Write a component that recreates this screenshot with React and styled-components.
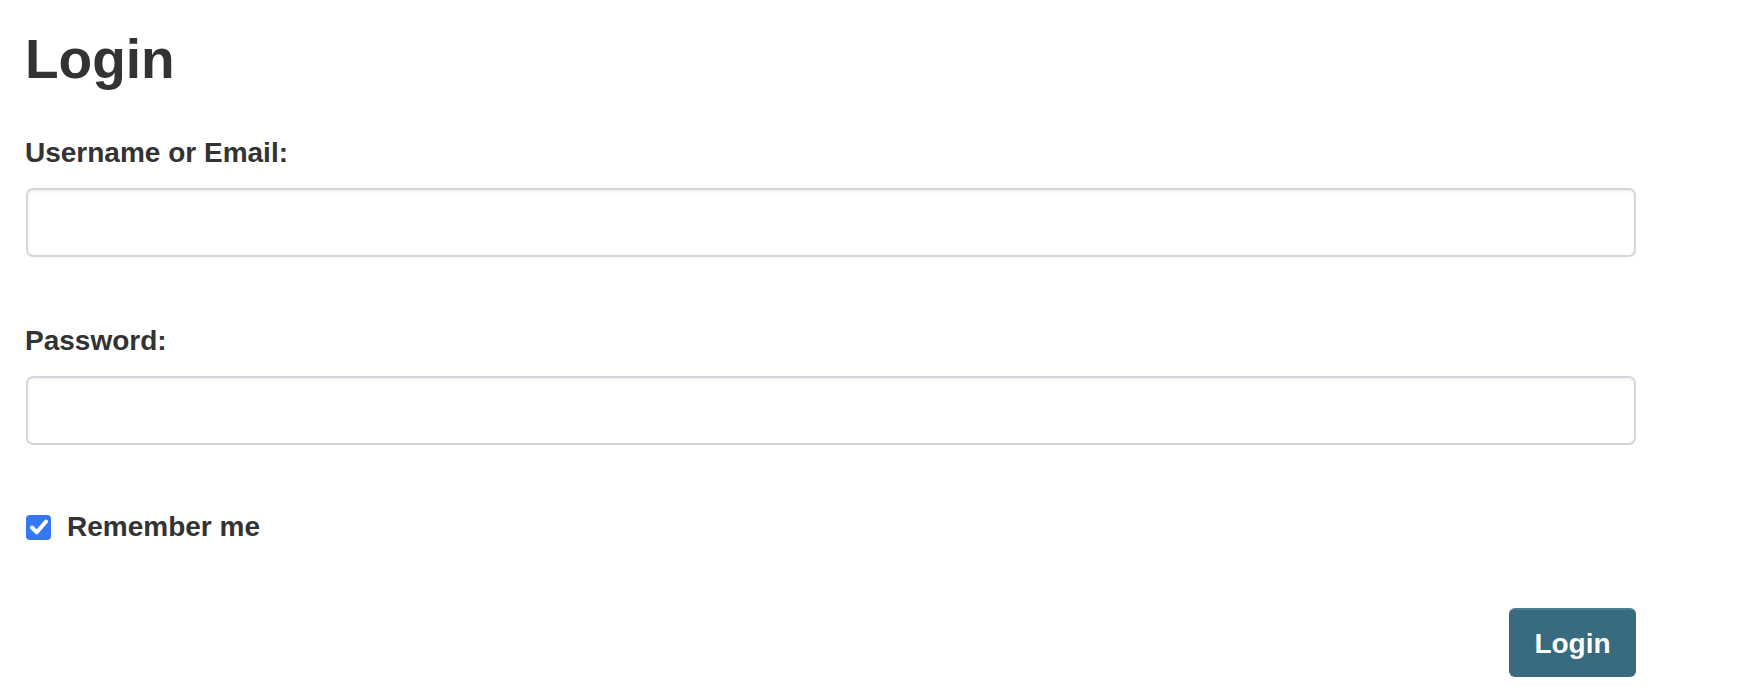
import React from "react";
import styled, { createGlobalStyle } from "styled-components";

const Global = createGlobalStyle`
  html, body { margin: 0; padding: 0; background: #ffffff; }
  body {
    font-family: "Liberation Sans", Arial, Helvetica, sans-serif;
    color: #333333;
  }
  * { box-sizing: border-box; }
`;

const Page = styled.main`
  padding: 27px 0 0 26px;
`;

const Form = styled.form`
  width: 1610px;
  display: flex;
  flex-direction: column;
`;

const Title = styled.h1`
  margin: 0 0 46px -1px;
  font-size: 55px;
  line-height: 64px;
  font-weight: 700;
  color: #333333;
`;

const Field = styled.div`
  display: flex;
  flex-direction: column;
  gap: 19px;
  margin-bottom: ${(p) => p.$spacing ?? 68}px;
`;

const Label = styled.label`
  font-size: 28px;
  line-height: 32px;
  font-weight: 700;
  color: #333333;
  margin-left: -1px;
`;

const Input = styled.input`
  width: 100%;
  height: 69px;
  border: 2px solid #d3d7dd;
  border-radius: 7px;
  background: #ffffff;
  box-shadow: inset 0 2px 3px rgba(0, 0, 0, 0.05);
  font-family: inherit;
  font-size: 27px;
  padding: 0 16px;
  outline: none;
`;

const CheckRow = styled.label`
  display: flex;
  align-items: center;
  gap: 16px;
  height: 32px;
  margin-bottom: 65px;
  cursor: pointer;
`;

const HiddenCheck = styled.input`
  position: absolute;
  opacity: 0;
  width: 0;
  height: 0;
`;

const Box = styled.span`
  width: 25px;
  height: 25px;
  border-radius: 4px;
  background: #3478f6;
  display: flex;
  align-items: center;
  justify-content: center;
  flex-shrink: 0;
`;

const CheckText = styled.span`
  font-size: 28px;
  line-height: 32px;
  font-weight: 700;
  color: #333333;
`;

const Actions = styled.div`
  display: flex;
  justify-content: flex-end;
`;

const Button = styled.button`
  width: 127px;
  height: 69px;
  border: none;
  border-top: 2px solid #4d7e93;
  border-radius: 6px;
  background: #386a80;
  color: #ffffff;
  font-family: inherit;
  font-size: 28px;
  font-weight: 700;
  cursor: pointer;
`;

export default function App() {
  return (
    <>
      <Global />
      <Page>
        <Form onSubmit={(e) => e.preventDefault()}>
          <Title>Login</Title>
          <Field>
            <Label htmlFor="user">Username or Email:</Label>
            <Input id="user" type="text" />
          </Field>
          <Field $spacing={66}>
            <Label htmlFor="pass">Password:</Label>
            <Input id="pass" type="password" />
          </Field>
          <CheckRow>
            <HiddenCheck type="checkbox" defaultChecked />
            <Box>
              <svg width="22" height="22" viewBox="0 0 22 22" fill="none">
                <path
                  d="M4 11.5 L8.8 16.3 L18 5.5"
                  stroke="#ffffff"
                  strokeWidth="4"
                  strokeLinecap="round"
                  strokeLinejoin="round"
                />
              </svg>
            </Box>
            <CheckText>Remember me</CheckText>
          </CheckRow>
          <Actions>
            <Button type="submit">Login</Button>
          </Actions>
        </Form>
      </Page>
    </>
  );
}
